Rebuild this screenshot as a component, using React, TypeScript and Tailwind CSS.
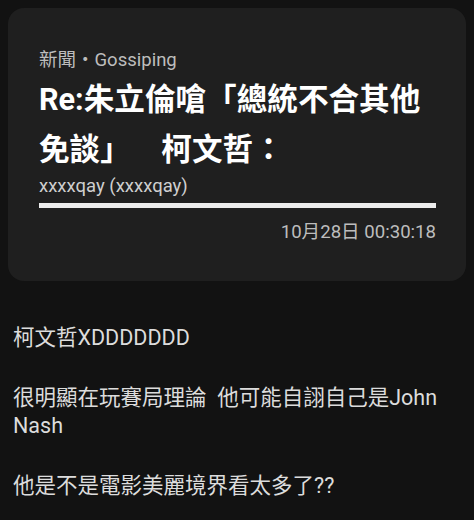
import React from "react";

export default function App() {
  const font = { fontFamily: 'Roboto, "Noto Sans CJK TC", sans-serif' };

  return (
    <div className="w-[474px] h-[520px] bg-[#121212] overflow-hidden [text-spacing-trim:space-all]" style={font}>
      {/* Article header card */}
      <div className="mx-2 mt-2 h-[273px] rounded-2xl bg-[#1f1f1f] pl-[31px] pr-[28px] pt-[39px]">
        <div className="text-[18.5px] leading-[26px] text-[#bdbdbd]">新聞・Gossiping</div>
        <h1 className="mt-[2px] text-[30.6px] leading-[50px] font-bold text-white">
          Re:朱立倫嗆「總統不合其他免談」　柯文哲：
        </h1>
        <div className="text-[18.5px] leading-[22px] text-[#cfcfcf]">xxxxqay (xxxxqay)</div>
        <div className="mt-[6px] mr-[2px] h-[5px] bg-[#ececec]" />
        <div className="mt-[12px] mr-[2px] text-right text-[18.6px] leading-[24px] text-[#bdbdbd]">10月28日 00:30:18</div>
      </div>

      {/* Post body */}
      <div className="mt-[43px] px-[13px] text-[21.5px] leading-[28px] text-[#dcdcdc]">
        <div>柯文哲XDDDDDDD</div>
        <div className="h-[32px]" />
        <div>很明顯在玩賽局理論&nbsp;&nbsp;他可能自詡自己是John Nash</div>
        <div className="h-[32px]" />
        <div>他是不是電影美麗境界看太多了??</div>
      </div>
    </div>
  );
}
